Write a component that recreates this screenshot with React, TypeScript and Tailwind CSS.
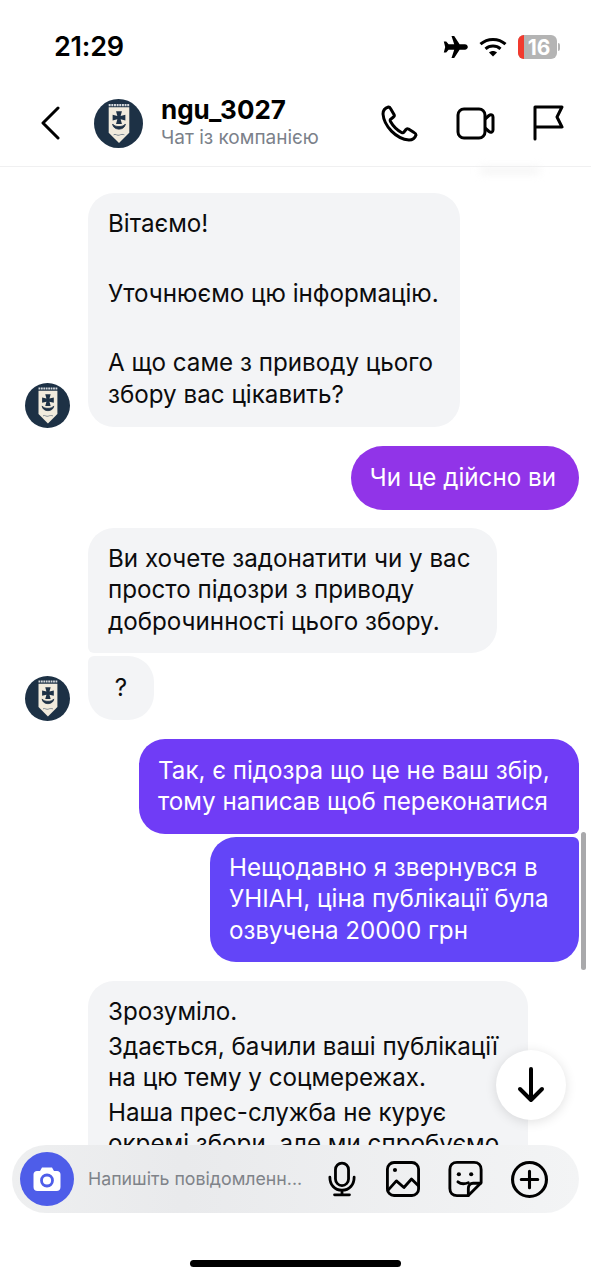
const font = { fontFamily: '"Inter", "Noto Sans", sans-serif' };

const Avatar = ({ size }: { size: number }) => (
  <svg width={size} height={size} viewBox="0 0 50 50" className="shrink-0">
    <circle cx="25" cy="25" r="25" fill="#1d3145" />
    <path d="M15 8.500H36V34.500L25.500 45L15 34.500Z" fill="#f1ebdd" />
    <path d="M15 6.200H36" stroke="#d5d9dc" strokeWidth="2.200" strokeDasharray="2 .7" />
    <path d="M22.500 12.500H28.500L27.200 17.300L32 16V22L27.200 20.700L28.500 25.500H22.500L23.800 20.700L19 22V16L23.800 17.300Z" fill="#1d3145" />
    <path d="M19 25.500C19.500 32.500 31.500 32.500 32 25.500C30 29 21 29 19 25.500Z" fill="#1d3145" stroke="#1d3145" strokeWidth=".8" />
    <path d="M20 36.500C22 35 24 38 26 36.800C27.500 36 29.500 36 31 36.500" fill="none" stroke="#77838d" strokeWidth="1" />
  </svg>
);

const StatusBar = () => (
  <div className="flex h-[82px] shrink-0 items-start justify-between pl-[54px] pr-[31px] pt-[31px]">
    <span className="text-[27px] font-semibold leading-8 text-black tracking-[-0.2px]">21:29</span>
    <div className="flex items-center gap-[11px] pt-[4px]">
      <svg width="26" height="24" viewBox="0 0 26 24">
        <path d="M9.500 1H12.200L17.600 9.300H22.800C24.600 9.300 25.800 10.600 25.800 12C25.800 13.400 24.600 14.700 22.800 14.700H17.600L12.200 23H9.500L12.200 14.700H6.600L4.200 17.400H1.800L3.200 12L1.800 6.600H4.200L6.600 9.300H12.200Z" fill="#000" />
      </svg>
      <svg width="28" height="20" viewBox="0 0 28 20">
        <path d="M1.500 7.200C8.500 .8 19.500 .8 26.500 7.200" fill="none" stroke="#000" strokeWidth="3" />
        <path d="M6.500 11.800C10.800 8 17.200 8 21.500 11.800" fill="none" stroke="#000" strokeWidth="3" />
        <path d="M10 15.400L14 19.600L18 15.400C15.600 13.400 12.400 13.400 10 15.400Z" fill="#000" />
      </svg>
      <div className="flex items-center gap-[1px]">
        <div className="relative flex h-[24px] w-[39px] items-center justify-center overflow-hidden rounded-[6px] bg-[#b4b4b4]">
          <div className="absolute inset-y-0 left-0 w-[6px] bg-[#f23a2e]" />
          <span className="relative pl-[3px] text-[21px] font-bold leading-none text-white">16</span>
        </div>
        <div className="h-[8px] w-[2px] rounded-r-full bg-[#b4b4b4]" />
      </div>
    </div>
  </div>
);

const ChatHeader = () => (
  <div className="relative z-10 flex h-[85px] shrink-0 items-center border-b border-[#f0f0f1] bg-white pb-[2px] pl-[40px] pr-[27px]">
    <svg width="20" height="34" viewBox="0 0 20 34" fill="none" stroke="#000" strokeWidth="3" strokeLinecap="round" strokeLinejoin="round" className="shrink-0">
      <path d="M18 2L3 17L18 32" />
    </svg>
    <div className="ml-[34px]">
      <Avatar size={49} />
    </div>
    <div className="ml-[18px] flex flex-col">
      <span className="text-[26px] font-bold leading-[30px] text-black">ngu_3027</span>
      <span className="text-[19px] leading-[26px] text-[#7b818a]">Чат із компанією</span>
    </div>
    <div className="ml-auto flex items-center gap-[38px]">
      <svg width="37" height="37" viewBox="0 0 37 37" fill="none" stroke="#000" strokeWidth="3" strokeLinejoin="round">
        <path d="M7.500 2C4 3 2 6 2 9C3 21 15 34 28 35C31 35 34 33 35 30C35 29 34 28 33 27.500L27.500 24C26.500 23.500 25.500 23.700 25 24.500L23 27C22.500 27.800 21.500 28 20.500 27.500C16 25 12 21 9.500 16.500C9 15.500 9.200 14.500 10 14L12.500 12C13.300 11.500 13.500 10.500 13 9.500L9.500 3.500C9 2.500 8.500 2 7.500 2Z" />
      </svg>
      <svg width="39" height="33" viewBox="0 0 39 33" fill="none" stroke="#000" strokeWidth="3" strokeLinejoin="round">
        <rect x="2" y="2" width="27" height="29" rx="6" />
        <path d="M29 12L33 8.500C35 7 37 8 37 10V23C37 25 35 26 33 24.500L29 21" />
      </svg>
      <svg width="31" height="36" viewBox="0 0 31 36" fill="none" stroke="#000" strokeWidth="3" strokeLinecap="round" strokeLinejoin="round">
        <path d="M2 34V2H29L24 12L29 22H2" />
      </svg>
    </div>
    <div className="absolute left-[480px] top-[86px] h-[5px] w-[60px] rounded-full bg-[#f0f0f0] blur-[4px]" />
  </div>
);

const Received = ({ children, avatar, className }: { children: React.ReactNode; avatar?: boolean; className: string }) => (
  <div className="flex items-end">
    <div className="flex w-[88px] shrink-0 justify-start pl-[25px]">
      {avatar && <div className="-mb-[1px]"><Avatar size={45} /></div>}
    </div>
    <div className={`bg-[#f3f4f6] px-[20px] text-[24.200px] leading-[31.500px] text-[#0c0c0d] ${className}`}>{children}</div>
  </div>
);

const Sent = ({ children, color, className }: { children: React.ReactNode; color: string; className: string }) => (
  <div className="flex justify-end pr-[12px]">
    <div className={`text-[24.200px] leading-[31.500px] text-white ${color} ${className}`}>{children}</div>
  </div>
);

const Messages = () => (
  <div className="flex min-h-0 flex-1 flex-col overflow-hidden pt-[26px]">
    <Received avatar className="w-[372px] rounded-[26px] pb-[17px] pt-[15px]">
      <p>Вітаємо!</p>
      <p className="mt-[38px]">Уточнюємо цю інформацію.</p>
      <p className="mt-[38px]">А що саме з приводу цього збору вас цікавить?</p>
    </Received>
    <div className="mt-[19px]">
      <Sent color="bg-[#9134e8]" className="rounded-[32px] py-[16px] pl-[19px] pr-[23px]">Чи це дійсно ви</Sent>
    </div>
    <div className="mt-[18px]">
      <Received className="w-[409px] rounded-[26px] rounded-bl-[6px] pb-[16px] pt-[15px]">
        Ви хочете задонатити чи у вас просто підозри з приводу доброчинності цього збору.
      </Received>
    </div>
    <div className="mt-[3px]">
      <Received avatar className="w-[66px] rounded-[26px] rounded-tl-[6px] py-[16px] text-center">?</Received>
    </div>
    <div className="mt-[19px]">
      <Sent color="bg-[#703cf6]" className="w-[440px] rounded-[26px] rounded-br-[6px] py-[16px] pl-[19px] pr-[20px]">
        Так, є підозра що це не ваш збір, тому написав щоб переконатися
      </Sent>
    </div>
    <div className="mt-[3px]">
      <Sent color="bg-[#6345f8]" className="w-[369px] rounded-[26px] rounded-tr-[6px] pb-[16px] pl-[19px] pr-[20px] pt-[15px]">
        Нещодавно я звернувся в УНІАН, ціна публікації була озвучена 20000 грн
      </Sent>
    </div>
    <div className="mt-[19px]">
      <Received className="w-[440px] rounded-t-[26px] pb-[40px] pt-[15px]">
        <p>Зрозуміло.</p>
        <p className="mt-[3px]">Здається, бачили ваші публікації на цю тему у соцмережах.</p>
        <p className="mt-[3px]">Наша прес-служба не курує окремі збори, але ми спробуємо</p>
      </Received>
    </div>
  </div>
);

const Composer = () => (
  <div className="absolute inset-x-0 bottom-0 h-[135px] bg-white">
    <div className="mx-[12px] flex h-[68px] items-center rounded-[34px] bg-gradient-to-r from-[#eeeff0] via-[#e9eaec] via-30% to-[#f3f4f5] pl-[8px] pr-[31px]">
      <div className="flex h-[54px] w-[54px] shrink-0 items-center justify-center rounded-full bg-[#4e5de9]">
        <svg width="30" height="28" viewBox="0 0 30 28">
          <path d="M10 2.500H20L22 6H25C27 6 28.500 7.500 28.500 9.500V22C28.500 24.500 27 26 24.500 26H5.500C3 26 1.500 24.500 1.500 22V9.500C1.500 7.500 3 6 5 6H8Z" fill="#fff" />
          <circle cx="15" cy="15.500" r="5.500" fill="none" stroke="#4e5de9" strokeWidth="2.800" />
        </svg>
      </div>
      <span className="ml-[14px] text-[17.750px] leading-none text-[#7f8389]">Напишіть повідомленн...</span>
      <div className="ml-auto flex items-center gap-[28px]">
        <svg width="28" height="36" viewBox="0 0 30 38" fill="none" stroke="#000" strokeWidth="3" strokeLinecap="round" className="mr-[2px]">
          <rect x="8" y="2" width="14" height="24" rx="7" />
          <path d="M2 17C2 25 7 31 15 31C23 31 28 25 28 17M15 31V36M7 36H23" />
        </svg>
        <svg width="34" height="36" viewBox="0 0 36 38" fill="none" stroke="#000" strokeWidth="3" strokeLinejoin="round" strokeLinecap="round">
          <rect x="1.500" y="1.500" width="33" height="35" rx="7" />
          <circle cx="9.500" cy="9.500" r="2.200" fill="#000" stroke="none" />
          <path d="M2 31L11 21L19 28L27 19L34 26" />
        </svg>
        <svg width="35" height="36" viewBox="0 0 36 38" fill="none" stroke="#000" strokeWidth="3" strokeLinejoin="round" strokeLinecap="round">
          <path d="M21 36.500H9C4.500 36.500 1.500 33.500 1.500 29V9C1.500 4.500 4.500 1.500 9 1.500H27C31.500 1.500 34.500 4.500 34.500 9V23Z" />
          <path d="M21 36.500V29C21 26 23 23.500 26 23.500H34" />
          <circle cx="11" cy="14" r="2.200" fill="#000" stroke="none" />
          <circle cx="24" cy="14" r="2.200" fill="#000" stroke="none" />
          <path d="M10 22C13 24.500 17 24.500 21 23" />
        </svg>
        <svg width="37" height="37" viewBox="0 0 36 36" fill="none" stroke="#000" strokeWidth="3" strokeLinecap="round">
          <circle cx="18" cy="18" r="16.500" />
          <path d="M18 10V26M10 18H26" />
        </svg>
      </div>
    </div>
    <div className="mx-auto mt-[47px] h-[7px] w-[211px] rounded-full bg-black" />
  </div>
);

export default function App() {
  return (
    <div className="relative flex h-[1280px] w-[591px] flex-col overflow-hidden bg-white" style={font}>
      <StatusBar />
      <ChatHeader />
      <Messages />
      <div className="absolute left-[581px] top-[832px] h-[138px] w-[5px] rounded-full bg-[#a9a9ab]" />
      <div className="absolute left-[496px] top-[1050px] flex h-[70px] w-[70px] items-center justify-center rounded-full bg-white shadow-[0_2px_12px_rgba(0,0,0,0.12)]">
        <svg width="28" height="38" viewBox="0 0 28 38" fill="none" stroke="#000" strokeWidth="4" strokeLinecap="round" strokeLinejoin="round">
          <path d="M14 3V34M3 23L14 34L25 23" />
        </svg>
      </div>
      <Composer />
    </div>
  );
}
